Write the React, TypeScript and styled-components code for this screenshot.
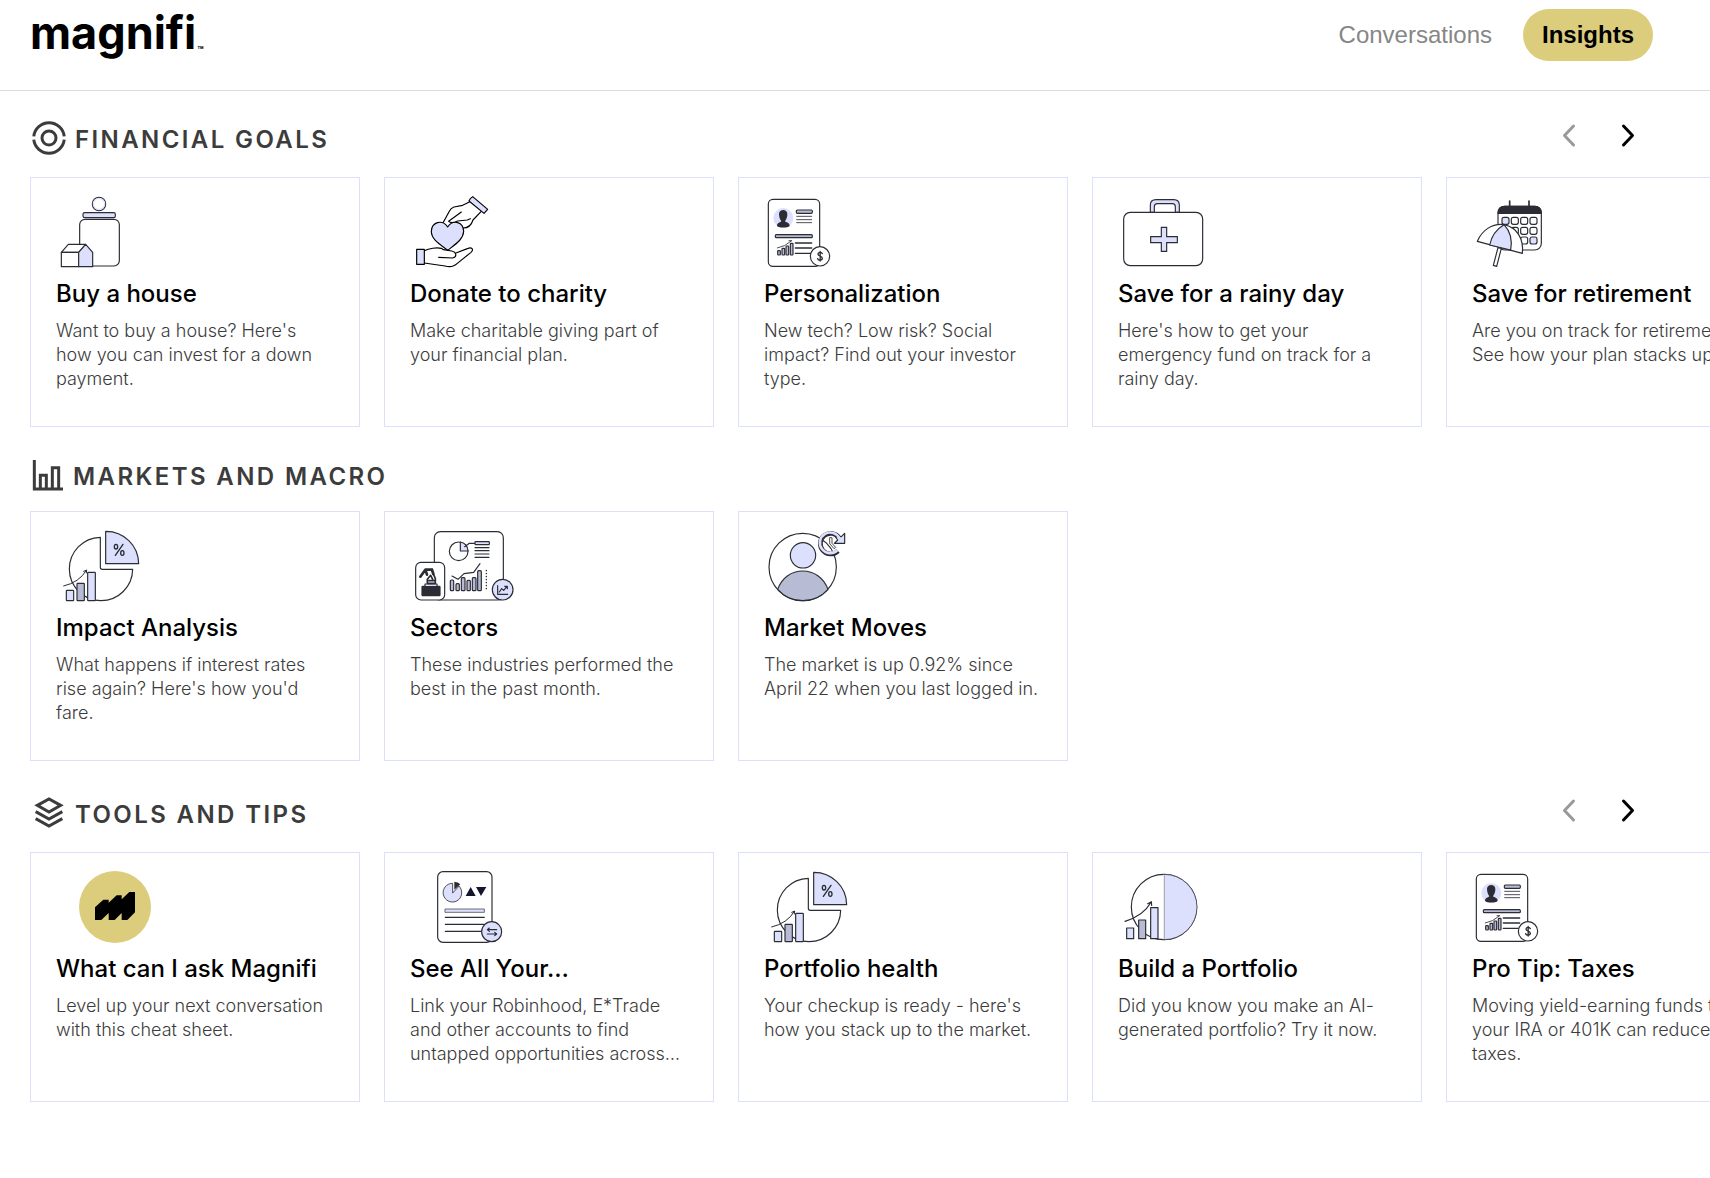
import React, { useRef, useState } from "react";
import styled, { createGlobalStyle } from "styled-components";

const ink = "#2b2c34";
const lilac = "#dce0fd";
const slate = "#b7bbd4";
const gold = "#dccd7c";

const GlobalStyle = createGlobalStyle`
  *, *::before, *::after { box-sizing: border-box; }
  body {
    margin: 0;
    background: #fff;
    color: #000;
    font-family: Inter, "Liberation Sans", sans-serif;
  }
`;

const Page = styled.div`
  min-height: 100vh;
  overflow: hidden;
`;

const Header = styled.header`
  display: flex;
  justify-content: space-between;
  align-items: flex-start;
  height: 91px;
  padding: 9px 57px 0 30px;
  border-bottom: 1px solid #dcdcdc;
`;

const Logo = styled.a`
  display: flex;
  align-items: flex-end;
  gap: 1px;
  color: #000;
  font-size: 45px;
  font-weight: 700;
  line-height: 48px;
  text-decoration: none;
`;

const Trademark = styled.span`
  font-size: 10px;
  line-height: 14px;
`;

const Nav = styled.nav`
  display: flex;
  align-items: center;
  gap: 12px;
`;

const NavLink = styled.a<{ $active?: boolean }>`
  padding: 0 19px;
  border-radius: 26px;
  background: ${(p) => (p.$active ? gold : "transparent")};
  color: ${(p) => (p.$active ? "#000" : "#868686")};
  font-family: "Liberation Sans", Arial, sans-serif;
  font-size: 24px;
  font-weight: ${(p) => (p.$active ? 700 : 400)};
  line-height: 52px;
  text-decoration: none;
`;

const Main = styled.main`
  display: flex;
  flex-direction: column;
  gap: 15px;
  padding: 10px 0 64px;
`;

const SectionHeader = styled.div`
  display: flex;
  justify-content: space-between;
  align-items: center;
  padding: 16px 60px 16px 30px;
`;

const SectionTitle = styled.h2`
  display: flex;
  align-items: center;
  gap: 7px;
  margin: 0;
  color: #3c3c3c;
  font-size: 24px;
  font-weight: 600;
  line-height: 37px;
  letter-spacing: 0.1em;
  text-transform: uppercase;
`;

const Pager = styled.div`
  display: flex;
  gap: 15px;
  padding-bottom: 8px;
`;

const PagerButton = styled.button`
  display: grid;
  place-items: center;
  width: 44px;
  height: 36px;
  padding: 0;
  border: 0;
  background: none;
  color: #000;
  cursor: pointer;

  &:disabled {
    color: #999;
    cursor: default;
  }
`;

const CardRow = styled.ul`
  display: flex;
  gap: 24px;
  margin: 0;
  padding: 0 30px;
  list-style: none;
  overflow-x: auto;
  scrollbar-width: none;
`;

const CardItem = styled.li`
  flex: 0 0 330px;
`;

const CardLink = styled.a`
  display: block;
  height: 250px;
  padding: 16px 25px;
  border: 1px solid ${lilac};
  color: inherit;
  text-decoration: none;
`;

const CardTitle = styled.h3`
  margin: 9px 0;
  font-size: 24px;
  font-weight: 500;
  line-height: 32px;
  white-space: nowrap;
`;

const CardText = styled.p`
  margin: 0;
  color: #3c3c3c;
  font-size: 18px;
  font-weight: 300;
  line-height: 24px;
`;

const Drawing = styled.svg`
  display: block;
  flex: none;
  overflow: visible;
`;

type ArtProps = { viewBox: string; children: React.ReactNode };

const Art = ({ viewBox, children }: ArtProps) => (
  <Drawing width="100" height="75" viewBox={viewBox} fill="none" stroke={ink} strokeWidth="3.500" strokeLinejoin="round" strokeLinecap="round" aria-hidden="true">
    {children}
  </Drawing>
);

const HouseArt = () => (
  <Art viewBox="108 72 300 225">
    <circle cx="237" cy="102" r="20" />
    <circle cx="237" cy="102" r="17" stroke={lilac} />
    <rect x="189" y="128" width="97" height="15" rx="5" fill={lilac} />
    <rect x="179" y="148" width="119" height="140" rx="16" />
    <path d="M124 247L145 223H197L176 247Z" fill="#fff" />
    <path d="M124 247H176V290H124Z" fill="#fff" />
    <path d="M176 247L197 223L218 247V290H176Z" fill={lilac} />
  </Art>
);

const CharityArt = () => (
  <Art viewBox="90 72 300 225">
    <g stroke="#000">
      <path d="M268 96L248 106L222 111C215 113 211 117 208 124L190 157" />
      <path d="M303 125L279 150C274 166 264 174 250 174" />
      <path d="M244 126L206 154C214 162 225 157 233 153L262 150L271 146" />
      <path d="M278 80L323 118L312 130L267 93Q270 84 278 80Z" fill={lilac} />
      <path d="M203 241C175 220 154 207 154 184C155 157 186 146 203 171C220 146 250 157 251 184C250 207 230 220 203 241Z" fill={lilac} />
      <path d="M133 242C147 235 170 232 184 235L190 239L215 243C231 247 231 262 218 264L176 262" />
      <path d="M228 249L262 236C275 230 283 238 273 247L232 280C222 290 210 292 195 288L133 279" />
      <rect x="110" y="238" width="23" height="45" fill={lilac} />
    </g>
  </Art>
);

const ProfileArt = () => (
  <Art viewBox="102 72 300 225">
    <rect x="115" y="88" width="154" height="201" rx="14" />
    <circle cx="160" cy="144" r="30" fill={lilac} stroke="none" />
    <path d="M147 132C147 116 172 116 172 132C173 142 167 150 165 154C169 158 179 158 179 168C172 174 148 174 141 168C141 158 151 158 154 154C151 150 147 142 147 132Z" fill={ink} stroke="none" />
    <rect x="199" y="120" width="48" height="10" rx="3" fill={slate} />
    <path d="M200 139H245M200 149H245M200 158H245" strokeWidth="2.500" />
    <rect x="136" y="194" width="111" height="9" rx="3" fill={slate} />
    <path d="M196 219H245M196 234H245M196 250H245" strokeWidth="4" />
    <g fill={slate}>
      <rect x="143" y="242" width="8" height="13" rx="2" />
      <rect x="156" y="235" width="8" height="20" rx="2" />
      <rect x="168" y="228" width="8" height="27" rx="2" />
      <rect x="181" y="220" width="8" height="35" rx="2" />
    </g>
    <path d="M142 234Q165 230 184 213M177 212H185" strokeWidth="2.500" />
    <circle cx="270" cy="259" r="29" fill="#fff" />
    <path d="M277 251C275 245 264 246 264 252C264 260 277 256 277 265C277 272 265 272 263 266M270.500 244V273" strokeWidth="4" />
  </Art>
);

const MedicalCaseArt = () => (
  <Art viewBox="84 72 300 225">
    <path d="M181 127V106Q181 89 198 89H251Q268 89 268 106V127H256V110Q256 101 247 101H202Q193 101 193 110V127Z" fill={lilac} />
    <rect x="101" y="127" width="237" height="160" rx="20" fill="#fff" />
    <path d="M214 172H230V200H262V218H230V244H214V218H182V200H214Z" fill={lilac} strokeLinejoin="miter" />
  </Art>
);

const RetirementArt = () => (
  <Art viewBox="516 582 300 225">
    <path d="M629 603V620M687 603V620" strokeWidth="5" />
    <rect x="594" y="619" width="130" height="131" rx="20" />
    <path d="M594 640Q594 619 614 619H704Q724 619 724 640Z" fill={ink} />
    {[662, 692, 721].map((cy, row) =>
      [616, 644, 672, 700].map((cx, col) => (
        <rect
          key={`${cx}-${cy}`}
          x={cx - 10}
          y={cy - 10}
          width="21"
          height="21"
          rx="6"
          fill={(row === 0 && col === 0) || (row === 2 && col === 3) ? lilac : "#fff"}
        />
      ))
    )}
    <path d="M594 743L580 796L590 799L604 745Z" fill="#fff" />
    <path d="M532 724C546 690 578 669 612 674C650 682 672 715 667 760Z" fill="#fff" />
    <path d="M569 735C574 710 588 688 612 674C632 695 637 722 632 750Z" fill={lilac} />
  </Art>
);

const PieChartArt = () => (
  <Art viewBox="108 234 300 225">
    <path d="M241 262A95 95 0 1 0 338 358H247Q241 358 241 352Z" />
    <path d="M257 244A98 98 0 0 1 356 341H257Z" fill={lilac} />
    <g strokeWidth="4">
      <ellipse cx="288" cy="290" rx="5" ry="7" />
      <ellipse cx="307" cy="309" rx="5" ry="7" />
      <path d="M309 283L286 316" />
    </g>
    <rect x="139" y="421" width="22" height="31" rx="2" fill={lilac} />
    <rect x="171" y="400" width="22" height="52" rx="2" fill={slate} />
    <rect x="203" y="367" width="23" height="85" rx="2" fill={lilac} />
    <path d="M131 408Q178 397 199 361M191 364L200 360L199 369" strokeWidth="3" />
  </Art>
);

const SectorsArt = () => (
  <Art viewBox="90 84 300 225">
    <rect x="163" y="95" width="207" height="205" rx="18" />
    <circle cx="236" cy="154" r="28" />
    <path d="M241 126V153H264Q262 130 241 126Z" fill={lilac} />
    <path d="M254 140L268 130H285" />
    <rect x="285" y="125" width="43" height="9" rx="2" fill={lilac} />
    <path d="M285 143H327M285 152H327M285 162H327M285 172H327" />
    <g fill={slate}>
      <rect x="211" y="240" width="10" height="32" rx="3" />
      <rect x="228" y="251" width="10" height="21" rx="3" />
      <rect x="244" y="233" width="11" height="39" rx="3" />
      <rect x="261" y="241" width="10" height="31" rx="3" />
      <rect x="277" y="233" width="11" height="39" rx="3" />
      <rect x="293" y="212" width="11" height="60" rx="3" />
    </g>
    <path d="M216 228L234 238L252 221L281 217L300 191" />
    <path d="M319 211V272" strokeWidth="4" strokeDasharray="1 8" />
    <rect x="107" y="187" width="87" height="113" rx="16" fill="#fff" />
    <rect x="126" y="259" width="54" height="28" rx="2" fill={ink} />
    <rect x="135" y="252" width="36" height="8" fill={lilac} />
    <path d="M142 250V238L152 226L158 238M166 250V236L156 212M145 250H164M146 242H164" strokeWidth="5" />
    <path d="M156 209L136 209L121 230M136 209L141 224M156 209L160 222" strokeWidth="8" />
    <circle cx="368" cy="269" r="31" fill={lilac} />
    <path d="M353 257V283H383M358 276L365 266L371 271L381 259M374 259H382V266" />
  </Art>
);

const MarketMovesArt = () => (
  <Art viewBox="1152 84 300 225">
    <circle cx="1268" cy="201" r="101" />
    <circle cx="1269" cy="166" r="38" fill={lilac} />
    <path d="M1193 268C1206 232 1235 213 1268 213S1331 232 1344 268A101 101 0 0 1 1193 268Z" fill={slate} />
    <path d="M1374 153A31 31 0 1 1 1378 114" stroke={ink} strokeWidth="14" strokeLinecap="butt" />
    <path d="M1394 100V130H1363L1373 120L1366 110H1384Z" fill={lilac} />
    <path d="M1372 151A31 31 0 1 1 1379 116" stroke={lilac} strokeWidth="8" strokeLinecap="butt" />
    <path d="M1350 113H1356V130L1367 142L1362 146L1350 132Z" fill="#fff" strokeWidth="2.500" />
  </Art>
);

const MagnifiArt = () => (
  <Art viewBox="108 267 300 225">
    <circle cx="285" cy="381" r="108" fill={gold} stroke="none" />
    <path
      d="M225 382L250 359H266V368L290 346H305V358L328 336H345V397L322 420H305V399L284 420H266V399L244 420H225Z"
      fill="#000"
      stroke="none"
    />
  </Art>
);

const AccountsArt = () => (
  <Art viewBox="90 87 300 225">
    <rect x="173" y="95" width="163" height="212" rx="16" />
    <path d="M218 158V130A28 28 0 1 0 238 139Z" fill={lilac} strokeWidth="2.500" />
    <path d="M223 149V125Q234 126 241 133Z" fill={ink} stroke="none" />
    <path d="M257 168L272 141L287 168ZM288 141H319L303 168Z" fill="#15162b" stroke="none" />
    <rect x="196" y="207" width="117" height="10" fill={lilac} strokeWidth="2" />
    <path d="M196 232H313M196 253H313M196 274H305" />
    <circle cx="335" cy="275" r="30" fill={lilac} />
    <path d="M350 269H322L328 264M322 269L328 274M322 282H350L344 277M350 282L344 287" />
  </Art>
);

const BuildArt = () => (
  <Art viewBox="84 237 300 225">
    <circle cx="222" cy="351" r="98" />
    <path d="M223 253A98 98 0 0 1 223 449Z" fill={lilac} stroke="none" />
    <path d="M223 253V449" stroke="#a9abb5" />
    <path d="M223 253A98 98 0 0 1 223 449" strokeWidth="2" />
    <rect x="110" y="414" width="21" height="32" fill={lilac} />
    <rect x="146" y="390" width="21" height="56" fill={slate} />
    <rect x="182" y="353" width="22" height="93" fill={lilac} />
    <path d="M105 394Q160 378 183 337M173 341L184 335L185 346" />
  </Art>
);

type SectionIconProps = { size: number; viewBox: string; children: React.ReactNode };

const SectionIcon = ({ size, viewBox, children }: SectionIconProps) => (
  <Drawing width={size} height={size} viewBox={viewBox} fill="none" stroke="#3c3c3c" strokeWidth="9" aria-hidden="true">
    {children}
  </Drawing>
);

const TargetIcon = () => (
  <SectionIcon size={38} viewBox="90 360 114 114">
    <circle cx="147" cy="414" r="21" />
    <path d="M101.300 409A46 46 0 0 1 192.700 409M101.300 419A46 46 0 0 0 192.700 419" />
  </SectionIcon>
);

const BarsIcon = () => (
  <SectionIcon size={36} viewBox="30 25 108 108">
    <path d="M43 28V115H129" />
    <path d="M61 115V74H79V115M97 115V51H116V115" />
  </SectionIcon>
);

const LayersIcon = () => (
  <SectionIcon size={38} viewBox="30 45 114 114">
    <path d="M52 76L87 57L122 76L87 96Z" />
    <path d="M47 95L87 117L127 95M47 116L87 138L127 116" />
  </SectionIcon>
);

const Chevron = ({ direction }: { direction: "left" | "right" }) => (
  <Drawing width="20" height="24" viewBox="0 0 20 24" fill="none" stroke="currentColor" strokeWidth="3" strokeLinecap="round" strokeLinejoin="round" aria-hidden="true">
    <path d={direction === "left" ? "M14.500 3L5.500 12.500L14.500 22" : "M5.500 3L14.500 12.500L5.500 22"} />
  </Drawing>
);

type CardData = { title: string; text: string; Illustration: () => React.ReactElement };

const goals: CardData[] = [
  { title: "Buy a house", text: "Want to buy a house? Here's how you can invest for a down payment.", Illustration: HouseArt },
  { title: "Donate to charity", text: "Make charitable giving part of your financial plan.", Illustration: CharityArt },
  { title: "Personalization", text: "New tech? Low risk? Social impact? Find out your investor type.", Illustration: ProfileArt },
  { title: "Save for a rainy day", text: "Here's how to get your emergency fund on track for a rainy day.", Illustration: MedicalCaseArt },
  { title: "Save for retirement", text: "Are you on track for retirement? See how your plan stacks up.", Illustration: RetirementArt },
];

const markets: CardData[] = [
  { title: "Impact Analysis", text: "What happens if interest rates rise again? Here's how you'd fare.", Illustration: PieChartArt },
  { title: "Sectors", text: "These industries performed the best in the past month.", Illustration: SectorsArt },
  { title: "Market Moves", text: "The market is up 0.92% since April 22 when you last logged in.", Illustration: MarketMovesArt },
];

const tips: CardData[] = [
  { title: "What can I ask Magnifi", text: "Level up your next conversation with this cheat sheet.", Illustration: MagnifiArt },
  { title: "See All Your…", text: "Link your Robinhood, E*Trade and other accounts to find untapped opportunities across…", Illustration: AccountsArt },
  { title: "Portfolio health", text: "Your checkup is ready - here's how you stack up to the market.", Illustration: PieChartArt },
  { title: "Build a Portfolio", text: "Did you know you make an AI-generated portfolio? Try it now.", Illustration: BuildArt },
  { title: "Pro Tip: Taxes", text: "Moving yield-earning funds to your IRA or 401K can reduce taxes.", Illustration: ProfileArt },
];

type CarouselProps = { title: string; icon: React.ReactNode; cards: CardData[]; paged?: boolean };

const Carousel = ({ title, icon, cards, paged }: CarouselProps) => {
  const row = useRef<HTMLUListElement>(null);
  const [atStart, setAtStart] = useState(true);
  const scroll = (step: number) => row.current?.scrollBy({ left: step * 354, behavior: "smooth" });

  return (
    <section aria-label={title}>
      <SectionHeader>
        <SectionTitle>
          {icon}
          {title}
        </SectionTitle>
        {paged && (
          <Pager>
            <PagerButton type="button" aria-label="Previous" disabled={atStart} onClick={() => scroll(-1)}>
              <Chevron direction="left" />
            </PagerButton>
            <PagerButton type="button" aria-label="Next" onClick={() => scroll(1)}>
              <Chevron direction="right" />
            </PagerButton>
          </Pager>
        )}
      </SectionHeader>
      <CardRow ref={row} onScroll={(e) => setAtStart(e.currentTarget.scrollLeft <= 0)}>
        {cards.map(({ title: cardTitle, text, Illustration }) => (
          <CardItem key={cardTitle}>
            <CardLink href="#">
              <Illustration />
              <CardTitle>{cardTitle}</CardTitle>
              <CardText>{text}</CardText>
            </CardLink>
          </CardItem>
        ))}
      </CardRow>
    </section>
  );
};

export default function App() {
  return (
    <Page>
      <GlobalStyle />
      <Header>
        <Logo href="#">
          magnifi
          <Trademark>™</Trademark>
        </Logo>
        <Nav>
          <NavLink href="#">Conversations</NavLink>
          <NavLink href="#" $active aria-current="page">
            Insights
          </NavLink>
        </Nav>
      </Header>
      <Main>
        <Carousel title="Financial Goals" icon={<TargetIcon />} cards={goals} paged />
        <Carousel title="Markets and Macro" icon={<BarsIcon />} cards={markets} />
        <Carousel title="Tools and Tips" icon={<LayersIcon />} cards={tips} paged />
      </Main>
    </Page>
  );
}
